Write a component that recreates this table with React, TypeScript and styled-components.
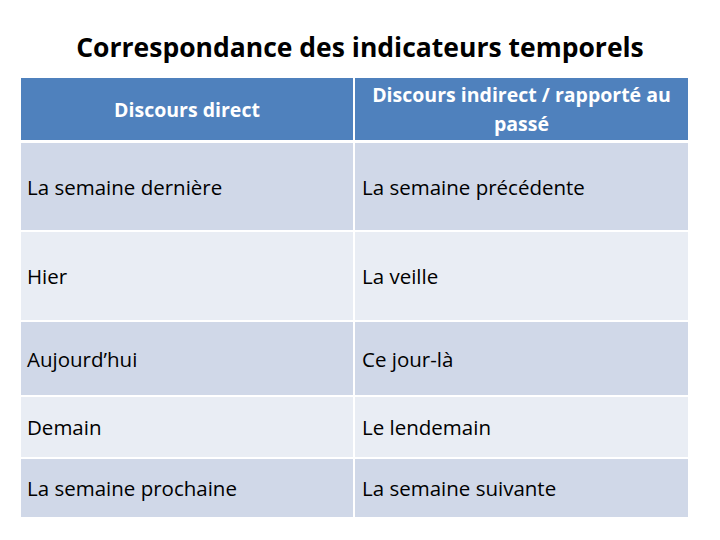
import React from "react";
import styled, { createGlobalStyle } from "styled-components";

const Global = createGlobalStyle`
  html, body { margin: 0; padding: 0; background: #ffffff; }
  body { font-family: "Open Sans", "Liberation Sans", sans-serif; }
`;

const Page = styled.div`
  width: 720px;
  height: 540px;
  background: #ffffff;
  display: flex;
  flex-direction: column;
`;

const Title = styled.h1`
  margin: 0;
  height: 78px;
  box-sizing: border-box;
  padding-top: 28px;
  text-align: center;
  font-family: "Open Sans", "Liberation Sans", sans-serif;
  font-weight: 700;
  font-size: 26.5px;
  line-height: 38px;
  color: #000000;
  letter-spacing: 0;
`;

const Table = styled.div`
  margin-left: 21px;
  width: 667px;
  display: grid;
  grid-template-columns: 332px 333px;
  column-gap: 2px;
  background: #ffffff;
`;

const HeadCell = styled.div<{ $h: number }>`
  height: ${(p) => p.$h}px;
  background: #4f81bd;
  color: #ffffff;
  font-weight: 700;
  font-size: 19.5px;
  line-height: 29px;
  letter-spacing: 0;
  display: flex;
  align-items: center;
  justify-content: center;
  text-align: center;
  margin-bottom: 3px;
  padding: 0 4px;
`;

const Cell = styled.div<{ $h: number; $alt: boolean; $pad: number }>`
  height: ${(p) => p.$h}px;
  background: ${(p) => (p.$alt ? "#e9edf4" : "#d0d8e8")};
  color: #000000;
  font-size: 20.5px;
  letter-spacing: 0;
  display: flex;
  align-items: center;
  padding-left: ${(p) => p.$pad}px;
  margin-bottom: 2px;
  box-sizing: border-box;
`;

const rows: [string, string, number][] = [
  ["La semaine dernière", "La semaine précédente", 87],
  ["Hier", "La veille", 88],
  ["Aujourd’hui", "Ce jour-là", 73],
  ["Demain", "Le lendemain", 60],
  ["La semaine prochaine", "La semaine suivante", 58],
];

export default function App() {
  return (
    <Page>
      <Global />
      <Title>Correspondance des indicateurs temporels</Title>
      <Table>
        <HeadCell $h={62}>Discours direct</HeadCell>
        <HeadCell $h={62}>
          Discours indirect / rapporté au
          <br />
          passé
        </HeadCell>
        {rows.map(([a, b, h], i) => (
          <React.Fragment key={a}>
            <Cell $h={h} $alt={i % 2 === 1} $pad={6}>{a}</Cell>
            <Cell $h={h} $alt={i % 2 === 1} $pad={7}>{b}</Cell>
          </React.Fragment>
        ))}
      </Table>
    </Page>
  );
}
